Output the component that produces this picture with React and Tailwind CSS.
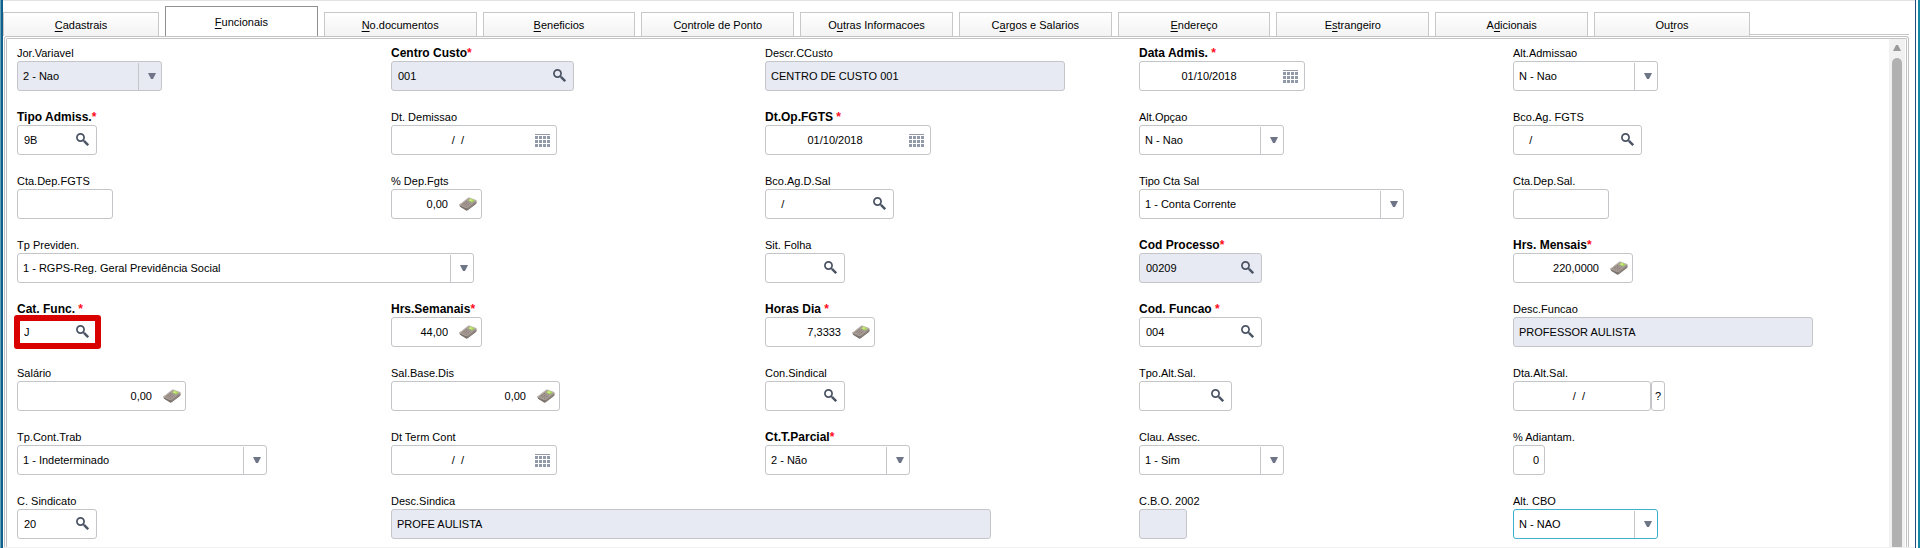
import { useState } from "react";
import clsx from "clsx";

// hotkey = index of the underlined letter
const TABS = [
  { label: "Cadastrais", hotkey: 0 },
  { label: "Funcionais", hotkey: 0 },
  { label: "No.documentos", hotkey: 0 },
  { label: "Beneficios", hotkey: 0 },
  { label: "Controle de Ponto", hotkey: 1 },
  { label: "Outras Informacoes", hotkey: 1 },
  { label: "Cargos e Salarios", hotkey: 1 },
  { label: "Endereço", hotkey: 0 },
  { label: "Estrangeiro", hotkey: 1 },
  { label: "Adicionais", hotkey: 1 },
  { label: "Outros", hotkey: 2 },
];

const FIELDS = [
  { label: "Jor.Variavel", type: "select", value: "2 - Nao", width: "w-[145px]", locked: true },
  { label: "Centro Custo", required: true, type: "search", value: "001", width: "w-[183px]", locked: true },
  { label: "Descr.CCusto", type: "text", value: "CENTRO DE CUSTO 001", width: "w-[300px]", locked: true },
  { label: "Data Admis. ", required: true, type: "date", value: "01/10/2018", width: "w-[166px]" },
  { label: "Alt.Admissao", type: "select", value: "N - Nao", width: "w-[145px]" },

  { label: "Tipo Admiss.", required: true, type: "search", value: "9B", width: "w-[80px]" },
  { label: "Dt. Demissao", type: "date", value: "/  /  ", width: "w-[166px]" },
  { label: "Dt.Op.FGTS ", required: true, type: "date", value: "01/10/2018", width: "w-[166px]" },
  { label: "Alt.Opçao", type: "select", value: "N - Nao", width: "w-[145px]" },
  { label: "Bco.Ag. FGTS", type: "search", value: "   /", width: "w-[129px]" },

  { label: "Cta.Dep.FGTS", type: "text", value: "", width: "w-[96px]" },
  { label: "% Dep.Fgts", type: "number", value: "0,00", width: "w-[91px]" },
  { label: "Bco.Ag.D.Sal", type: "search", value: "   /", width: "w-[129px]" },
  { label: "Tipo Cta Sal", type: "select", value: "1 - Conta Corrente", width: "w-[265px]" },
  { label: "Cta.Dep.Sal.", type: "text", value: "", width: "w-[96px]" },

  { label: "Tp Previden.", type: "select", value: "1 - RGPS-Reg. Geral Previdência Social", width: "w-[457px]", span: true },
  { label: "Sit. Folha", type: "search", value: "", width: "w-[80px]" },
  { label: "Cod Processo", required: true, type: "search", value: "00209", width: "w-[123px]", locked: true },
  { label: "Hrs. Mensais", required: true, type: "number", value: "220,0000", width: "w-[120px]" },

  { label: "Cat. Func. ", required: true, type: "search", value: "J", width: "w-[80px]", marked: true },
  { label: "Hrs.Semanais", required: true, type: "number", value: "44,00", width: "w-[91px]" },
  { label: "Horas Dia ", required: true, type: "number", value: "7,3333", width: "w-[110px]" },
  { label: "Cod. Funcao ", required: true, type: "search", value: "004", width: "w-[123px]" },
  { label: "Desc.Funcao", type: "text", value: "PROFESSOR AULISTA", width: "w-[300px]", locked: true },

  { label: "Salário", type: "number", value: "0,00", width: "w-[169px]" },
  { label: "Sal.Base.Dis", type: "number", value: "0,00", width: "w-[169px]" },
  { label: "Con.Sindical", type: "search", value: "", width: "w-[80px]" },
  { label: "Tpo.Alt.Sal.", type: "search", value: "", width: "w-[93px]" },
  { label: "Dta.Alt.Sal.", type: "help", value: "/  /  ", width: "w-[138px]" },

  { label: "Tp.Cont.Trab", type: "select", value: "1 - Indeterminado", width: "w-[250px]" },
  { label: "Dt Term Cont", type: "date", value: "/  /  ", width: "w-[166px]" },
  { label: "Ct.T.Parcial", required: true, type: "select", value: "2 - Não", width: "w-[145px]" },
  { label: "Clau. Assec.", type: "select", value: "1 - Sim", width: "w-[145px]" },
  { label: "% Adiantam.", type: "text", value: "0", width: "w-[32px]", align: "text-right" },

  { label: "C. Sindicato", type: "search", value: "20", width: "w-[80px]" },
  { label: "Desc.Sindica", type: "text", value: "PROFE AULISTA", width: "w-[600px]", locked: true, span: true },
  { label: "C.B.O. 2002", type: "text", value: "", width: "w-[48px]", locked: true },
  { label: "Alt. CBO", type: "select", value: "N - NAO", width: "w-[145px]", focused: true },
];

function SearchIcon() {
  return (
    <svg width="13" height="13" viewBox="0 0 13 13" fill="none" stroke="#4b5464" aria-hidden="true">
      <circle cx="4.5" cy="4.5" r="3.6" strokeWidth="1.7" />
      <path d="M7 7l1.6 1.6" strokeWidth="1.6" />
      <path d="M8.2 8.2l4 4" strokeWidth="2.4" />
    </svg>
  );
}

function CalendarIcon() {
  return (
    <svg width="15" height="13" viewBox="0 0 15 13" fill="#9299a8" shapeRendering="crispEdges" aria-hidden="true">
      <rect width="15" height="1" />
      {[2, 6, 10].map((y) =>
        [0, 4, 8, 12].map((x) => <rect key={`${x}-${y}`} x={x} y={y} width="3" height="3" />)
      )}
    </svg>
  );
}

function CalculatorIcon() {
  return (
    <svg width="18" height="14" viewBox="0 0 18 14" aria-hidden="true">
      <path d="M0.4 7.6L1 9.8L7 13.5Q8 14 8.8 13.3L17 7Q17.8 6.2 17.6 4.2Z" fill="#79716b" />
      <path d="M0.8 7.2L8.8 1Q9.6 0.4 10.6 0.7L17 3.1Q18 3.6 17.2 4.4L8.8 11Q8 11.6 7 11.2L0.9 8.4Q0 7.8 0.8 7.2Z" fill="#a69c95" />
      <path d="M1.2 7.4L9 1.4Q9.6 0.9 10.4 1.2L16.6 3.6" fill="none" stroke="#cbc5c0" strokeWidth="0.7" />
      <path d="M9 3.3L11.4 1.6L15.6 3.3L13 5.4Z" fill="#a9d957" />
      <path d="M10.2 3.2L11.6 2.2L13.4 2.9L11.8 4Z" fill="#d8f29a" />
      <path d="M3.6 7.4L7.8 4.2M5.3 8.4L9.4 5.1M7.2 9.4L11.2 6.2" stroke="#7c7069" strokeWidth="0.9" strokeDasharray="1.4 0.7" />
      <path d="M8.4 12.2L17 5.6" stroke="#a09790" strokeWidth="0.6" />
    </svg>
  );
}

const ICONS = {
  search: { Icon: SearchIcon, title: "Pesquisar", box: "w-[28px] pl-2 pb-px" },
  date: { Icon: CalendarIcon, title: "Calendário", box: "w-[26px] pl-[5px]" },
  number: { Icon: CalculatorIcon, title: "Calculadora", box: "w-[28px] pl-[6px]" },
};

const ALIGN = {
  date: "text-center",
  help: "text-center",
  number: "text-right",
};

function Field({ field, id }) {
  const { label, required, type, value, width, locked, marked, focused, span, align } = field;
  const button = ICONS[type];

  const frame = clsx(
    "relative flex h-[30px] rounded-[3px] border",
    width,
    locked ? "bg-[#e7eaf2]" : "bg-white",
    focused ? "border-[#3fb1cd]" : "border-[#c3c5c8]"
  );

  return (
    <div className={clsx("min-w-0", span && "col-span-2")}>
      <label htmlFor={id} className={clsx("block h-4 whitespace-pre leading-4", required && "text-xs leading-4 font-bold")}>
        {label}
        {required && <span className="text-[#ff0a1c]">*</span>}
      </label>

      <div className="flex">
        <div className={frame}>
          {type === "select" ? (
            <>
              <select
                id={id}
                disabled={locked}
                defaultValue={value}
                className="w-full appearance-none bg-transparent pl-[5px] pr-6 text-black opacity-100 outline-none"
              >
                <option>{value}</option>
              </select>
              <span className="pointer-events-none absolute bottom-0 right-0 top-px flex w-[23px] items-center justify-center border-l border-[#c3c5c8] pb-px pl-1">
                <svg width="8" height="6" viewBox="0 0 8 6" fill="#6d7587" aria-hidden="true">
                  <path d="M0 0h8L5 6H3z" />
                </svg>
              </span>
            </>
          ) : (
            <input
              id={id}
              type="text"
              readOnly={locked}
              defaultValue={value}
              className={clsx(
                "w-full min-w-0 flex-1 bg-transparent outline-none",
                type === "number" && "pl-1 pr-[5px]",
                type === "search" && "pl-[6px]",
                type !== "number" && type !== "search" && "px-[5px]",
                align || ALIGN[type]
              )}
            />
          )}
          {button && (
            <button type="button" aria-label={`${button.title} ${label}`} className={clsx("flex shrink-0 items-center", button.box)}>
              <button.Icon />
            </button>
          )}
          {marked && (
            <span className="pointer-events-none absolute -bottom-[3px] -left-1 -right-[5px] -top-[3px] rounded-[3px] border-[6px] border-[#d90000]" />
          )}
        </div>
        {type === "help" && (
          <button type="button" className="h-[30px] w-[14px] rounded-[3px] border border-[#c3c5c8] bg-white">
            ?
          </button>
        )}
      </div>
    </div>
  );
}

function TabBar({ active, onChange }) {
  return (
    <div className="mr-[6px] flex items-end pt-[5px]">
      <div role="tablist" className="flex flex-1 items-end gap-[6px]">
        {TABS.map(({ label, hotkey }, index) => (
          <button
            key={label}
            type="button"
            role="tab"
            aria-selected={active === index}
            onClick={() => onChange(index)}
            className={clsx(
              "whitespace-pre border border-b-0 pt-px text-center",
              index === 0 || index === TABS.length - 1 ? "w-[156px]" : "flex-1",
              active === index
                ? "h-[30px] border-[#8f9193] bg-white"
                : "h-6 border-[#c8c8c8] bg-linear-to-b from-white to-[#f3f3f3]"
            )}
          >
            {label.slice(0, hotkey)}
            <span className="underline underline-offset-2">{label[hotkey]}</span>
            {label.slice(hotkey + 1)}
          </button>
        ))}
      </div>
      <span className="h-[2px] w-[159px] border-t border-[#c8c8c8]" />
    </div>
  );
}

function Scrollbar() {
  return (
    <div className="mr-px flex w-4 shrink-0 flex-col items-center bg-[#f1f1f1] pt-[6px]">
      <svg width="8" height="6" viewBox="0 0 8 6" fill="#9a9a9a" aria-hidden="true">
        <path d="M3 0h2l3 6H0z" />
      </svg>
      <div className="mt-[7px] w-[10px] flex-1 rounded-t-[5px] bg-[#b1b1b1]" />
    </div>
  );
}

export default function App() {
  const [activeTab, setActiveTab] = useState(1);

  return (
    <div className="flex h-screen overflow-hidden bg-white font-['Liberation_Sans',Arial,sans-serif] text-[11px] text-black">
      <span className="w-px bg-[#62a5b8]" />
      <span className="w-[2px] bg-[#125f8c]" />

      <main className="flex min-w-0 flex-1 flex-col border-b border-t border-b-[#f0f0f0] border-t-[#e3e3e3]">
        <TabBar active={activeTab} onChange={setActiveTab} />

        <div className="ml-px mr-[6px] flex flex-1 rounded-t-[3px] border border-b-0 border-[#c3c3c3] px-px pt-px">
          <div className="flex flex-1 rounded-t-[2px] border border-b-0 border-[#c3c3c3]">
            <form className="grid flex-1 grid-cols-5 content-start gap-y-[18px] pl-[10px] pr-[2px] pt-[6px]">
              {FIELDS.map((field, index) => (
                <Field key={field.label} field={field} id={`field-${index}`} />
              ))}
            </form>
            <Scrollbar />
          </div>
        </div>
      </main>

      <span className="w-px bg-[#1b4f80]" />
      <span className="w-[2px] bg-white" />
      <span className="w-[2px] bg-[#1688a3]" />
    </div>
  );
}
